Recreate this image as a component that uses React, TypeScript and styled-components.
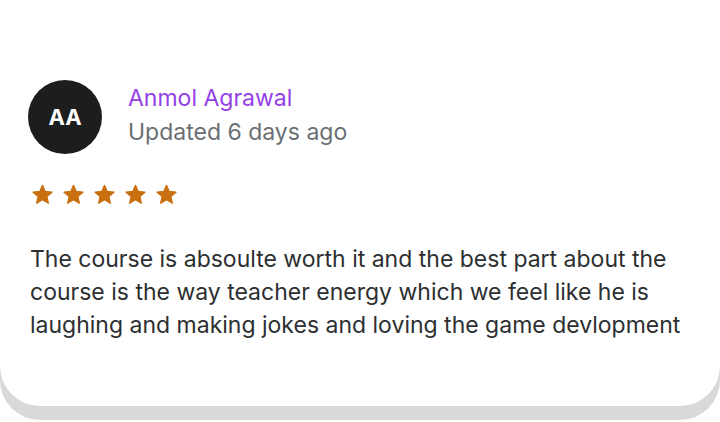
import React from 'react';
import styled, { createGlobalStyle } from 'styled-components';

const GlobalStyle = createGlobalStyle`
  html, body {
    margin: 0;
    padding: 0;
    background: #ffffff;
  }
  body {
    font-family: Inter, "Liberation Sans", sans-serif;
  }
`;

const Page = styled.div`
  width: 720px;
  height: 422px;
  overflow: hidden;
  background: #ffffff;
`;

const Card = styled.div`
  box-sizing: border-box;
  width: 720px;
  height: 406px;
  padding: 80px 26px 0 28px;
  background: #ffffff;
  border-radius: 0 0 40px 40px;
  box-shadow: 0 14px 0 #d9d9d9;
`;

const Header = styled.div`
  display: flex;
  align-items: center;
  gap: 26px;
`;

const Avatar = styled.div`
  width: 74px;
  height: 74px;
  border-radius: 50%;
  background: #1c1d1f;
  color: #ffffff;
  display: flex;
  align-items: center;
  justify-content: center;
  font-size: 22px;
  font-weight: 700;
`;

const Meta = styled.div`
  display: flex;
  flex-direction: column;
  gap: 6px;
  margin-top: -4px;
`;

const Name = styled.div`
  color: #9440e6;
  font-size: 23px;
  line-height: 28px;
`;

const Updated = styled.div`
  color: #6a6f73;
  font-size: 23px;
  line-height: 28px;
`;

const Stars = styled.div`
  display: flex;
  gap: 10px;
  margin-top: 30px;
  margin-left: 4px;
`;

const Body = styled.p`
  margin: 38px 0 0 2px;
  color: #2d2f31;
  font-size: 23px;
  line-height: 33px;
`;

const Star = () => (
  <svg width="21" height="21" viewBox="0 0 24 24">
    <path
      d="M12 1.5l3.1 7.1 7.7.7-5.8 5.1 1.7 7.6L12 18l-6.7 4 1.7-7.6-5.8-5.1 7.7-.7z"
      fill="#c8700f"
      stroke="#c8700f"
      strokeWidth="1.5"
      strokeLinejoin="round"
    />
  </svg>
);

export default function App() {
  return (
    <Page>
      <GlobalStyle />
      <Card>
        <Header>
          <Avatar>AA</Avatar>
          <Meta>
            <Name>Anmol Agrawal</Name>
            <Updated>Updated 6 days ago</Updated>
          </Meta>
        </Header>
        <Stars>
          {[0, 1, 2, 3, 4].map((i) => (
            <Star key={i} />
          ))}
        </Stars>
        <Body>
          The course is absoulte worth it and the best part about the course is the way teacher
          energy which we feel like he is laughing and making jokes and loving the game devlopment
        </Body>
      </Card>
    </Page>
  );
}
